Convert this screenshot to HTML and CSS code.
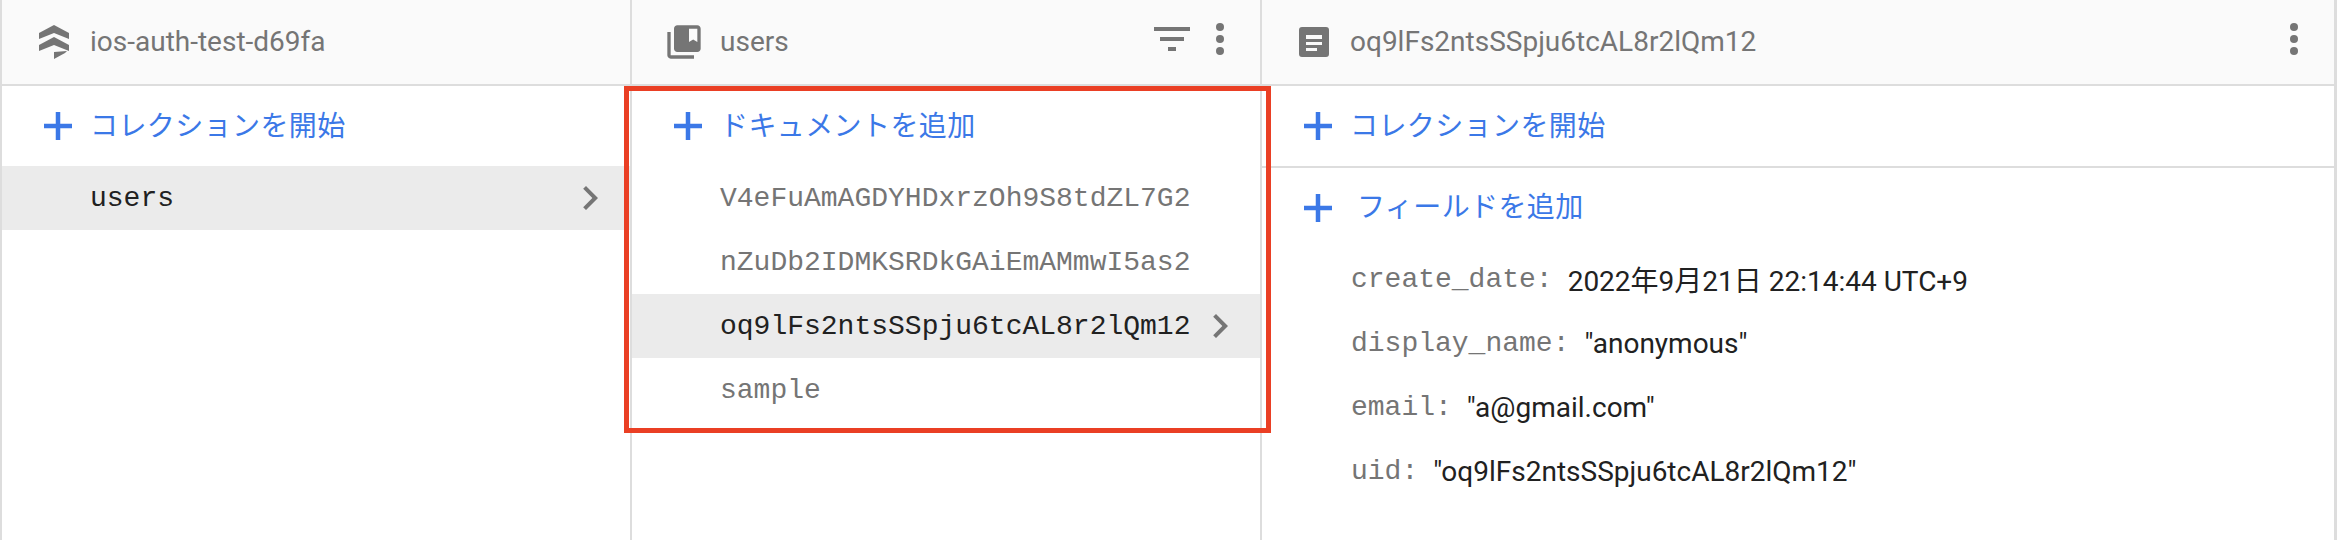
FILE: index.html
```html
<!DOCTYPE html>
<html lang="ja">
<head>
<meta charset="utf-8">
<title>Firestore</title>
<link rel="stylesheet" href="styles.css">
</head>
<body>
<main class="panels">
  <section class="col col-root">
    <header class="head">
      <svg class="head-icon" viewBox="0 0 40 40"><path d="M5 11 20 3l15 8v6L20 11 5 17zM5 23l15-8 15 8v6l-15-6-15 6zM20 30l13-1-2 2-11 6z"/></svg>
      <span class="title">ios-auth-test-d69fa</span>
    </header>
    <div class="add"><svg class="plus" viewBox="0 0 48 48"><path d="M21.750 10h4.500v11.750H38v4.500H26.250V38h-4.500V26.250H10v-4.500h11.750z"/></svg><span class="add-label">コレクションを開始</span></div>
    <div class="item selected"><span>users</span><svg class="chev" viewBox="0 0 24 24"><path d="M10 6 8.590 7.410 13.170 12l-4.580 4.590L10 18l6-6z"/></svg></div>
  </section>
  <section class="col col-docs">
    <header class="head">
      <svg class="head-icon" viewBox="0 0 24 24"><path d="M4 6H2v14c0 1.100.9 2 2 2h14v-2H4V6z"/><path d="M20 2H8c-1.100 0-2 .9-2 2v12c0 1.100.9 2 2 2h12c1.100 0 2-.9 2-2V4c0-1.100-.9-2-2-2zm0 10-2.500-1.500L15 12V4h5v8z"/></svg>
      <span class="title">users</span>
      <div class="actions">
        <svg class="act" viewBox="0 0 24 24"><path d="M10 18h4v-2h-4v2zM3 6v2h18V6H3zm3 7h12v-2H6v2z"/></svg>
        <svg class="act" viewBox="0 0 24 24"><circle cx="12" cy="6" r="2"/><circle cx="12" cy="12" r="2"/><circle cx="12" cy="18" r="2"/></svg>
      </div>
    </header>
    <div class="add"><svg class="plus" viewBox="0 0 48 48"><path d="M21.750 10h4.500v11.750H38v4.500H26.250V38h-4.500V26.250H10v-4.500h11.750z"/></svg><span class="add-label">ドキュメントを追加</span></div>
    <div class="item"><span>V4eFuAmAGDYHDxrzOh9S8tdZL7G2</span></div>
    <div class="item"><span>nZuDb2IDMKSRDkGAiEmAMmwI5as2</span></div>
    <div class="item selected"><span>oq9lFs2ntsSSpju6tcAL8r2lQm12</span><svg class="chev" viewBox="0 0 24 24"><path d="M10 6 8.590 7.410 13.170 12l-4.580 4.590L10 18l6-6z"/></svg></div>
    <div class="item"><span>sample</span></div>
  </section>
  <section class="col col-detail">
    <header class="head">
      <svg class="head-icon" viewBox="0 0 40 40"><path fill-rule="evenodd" d="M8 5h24a3 3 0 0 1 3 3v24a3 3 0 0 1-3 3H8a3 3 0 0 1-3-3V8a3 3 0 0 1 3-3zm4 8v4h16v-4zm0 7v3h16v-3zm0 6v3h11v-3z"/></svg>
      <span class="title">oq9lFs2ntsSSpju6tcAL8r2lQm12</span>
      <div class="actions">
        <svg class="act" viewBox="0 0 24 24"><circle cx="12" cy="6" r="2"/><circle cx="12" cy="12" r="2"/><circle cx="12" cy="18" r="2"/></svg>
      </div>
    </header>
    <div class="add add-sep"><svg class="plus" viewBox="0 0 48 48"><path d="M21.750 10h4.500v11.750H38v4.500H26.250V38h-4.500V26.250H10v-4.500h11.750z"/></svg><span class="add-label">コレクションを開始</span></div>
    <div class="add add-field"><svg class="plus" viewBox="0 0 48 48"><path d="M21.750 10h4.500v11.750H38v4.500H26.250V38h-4.500V26.250H10v-4.500h11.750z"/></svg><span class="add-label">フィールドを追加</span></div>
    <div class="fields">
      <div class="field"><span class="key">create_date:</span><span class="val">2022年9月21日 22:14:44 UTC+9</span></div>
      <div class="field"><span class="key">display_name:</span><span class="val">"anonymous"</span></div>
      <div class="field"><span class="key">email:</span><span class="val">"a@gmail.com"</span></div>
      <div class="field"><span class="key">uid:</span><span class="val">"oq9lFs2ntsSSpju6tcAL8r2lQm12"</span></div>
    </div>
  </section>
  <div class="highlight"></div>
</main>
</body>
</html>
```
FILE: styles.css
```css
* { box-sizing: border-box; }
html, body { margin: 0; padding: 0; background: #fff; }
body { font-family: Roboto, "Noto Sans CJK JP", sans-serif; }

.panels {
  position: relative;
  display: flex;
  width: 2338px;
  height: 540px;
  background: #fff;
  overflow: hidden;
}
.col {
  width: 630px;
  height: 540px;
  flex: none;
  border-left: 2px solid #ddd;
}
.col-detail {
  width: 1077px;
  border-right: 3px solid #ddd;
}

.head {
  display: flex;
  align-items: center;
  height: 86px;
  padding-left: 32px;
  background: #fafafa;
  border-bottom: 2px solid #ddd;
}
.head-icon {
  width: 40px;
  height: 40px;
  flex: none;
  fill: #757575;
}
.title {
  margin-left: 16px;
  padding-bottom: 2px;
  font-size: 28px;
  color: #757575;
  white-space: nowrap;
}
.actions {
  display: flex;
  align-self: flex-start;
  margin-left: auto;
  margin-top: 15px;
  padding-right: 16px;
}
.act {
  width: 48px;
  height: 48px;
  fill: #757575;
}

.add {
  display: flex;
  align-items: center;
  height: 80px;
  padding-left: 32px;
}
.add-sep {
  height: 82px;
  border-bottom: 2px solid #ddd;
}
.plus {
  width: 48px;
  height: 48px;
  flex: none;
  fill: #3b78e7;
}
.add-label {
  margin-left: 8px;
  padding-bottom: 4px;
  font-family: "Noto Sans CJK JP", sans-serif;
  font-size: 28px;
  letter-spacing: 0.4px;
  color: #3b78e7;
  white-space: nowrap;
}
.add-field .add-label {
  margin-left: 15px;
  padding-bottom: 6px;
}

.item {
  display: flex;
  align-items: center;
  height: 64px;
  padding: 0 16px 0 88px;
  font-family: "Liberation Mono", monospace;
  font-size: 28px;
  color: #757575;
}
.item.selected {
  background: #ebebeb;
  color: #212121;
}
.chev {
  width: 48px;
  height: 48px;
  margin-left: auto;
  fill: #757575;
}

.field {
  display: flex;
  align-items: center;
  height: 64px;
  padding-left: 89px;
  padding-bottom: 2px;
  white-space: nowrap;
}
.key {
  font-family: "Liberation Mono", monospace;
  font-size: 28px;
  color: #757575;
}
.val {
  margin-left: 15px;
  font-family: Roboto, "Noto Sans CJK JP", sans-serif;
  font-size: 28px;
  color: #212121;
}

.highlight {
  position: absolute;
  left: 624px;
  top: 86px;
  width: 647px;
  height: 347px;
  border: 5px solid #ea3f24;
  pointer-events: none;
}
```
